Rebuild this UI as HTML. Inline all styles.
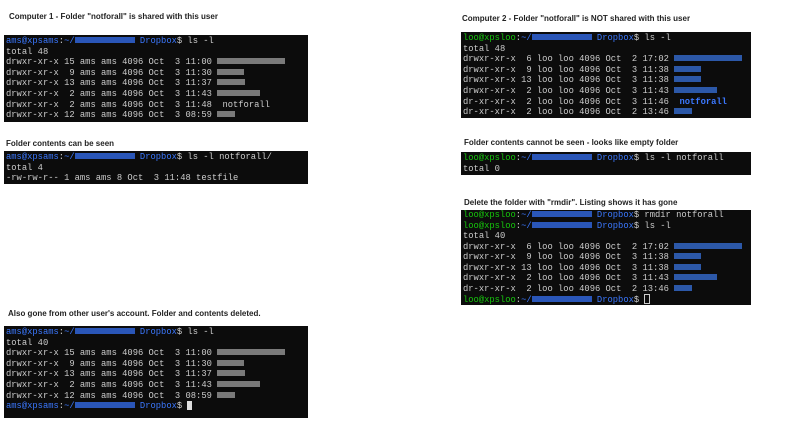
<!DOCTYPE html><html><head><style>
body{margin:0;width:800px;height:426px;background:#fff;position:relative;overflow:hidden;font-family:"Liberation Sans",Arial,sans-serif}
.t{position:absolute;font-size:8px;font-weight:bold;color:#222;white-space:nowrap}
.b{position:absolute;background:#0c0c0c;margin:0;font-family:"Liberation Mono",monospace;font-size:8.8px;line-height:10.6px;color:#cccccc;white-space:pre;padding:1px 0 0 2px;box-sizing:border-box;overflow:hidden}
.u{color:#3b78ff}.g{color:#16c60c}.d{color:#3b78ff}
.bl{display:inline-block;height:6px;vertical-align:0}
.gr{background:#7a7a7a}.bu{background:#2c58a8}.pb{background:#2a56b8}
.cur{display:inline-block;width:5px;height:9px;background:#ddd;vertical-align:-2px}
.cur2{display:inline-block;width:4px;height:8px;border:1px solid #ccc;vertical-align:-2px}
</style></head><body>
<div class="t" style="left:9px;top:12px">Computer 1 - Folder "notforall" is shared with this user</div>
<pre class="b" style="left:4px;top:35px;width:304px;height:87px"><span class="u">ams@xpsams</span>:<span class="d">~/</span><span class="bl pb" style="width:60px"></span><span class="d"> Dropbox</span>$ ls -l
total 48
drwxr-xr-x 15 ams ams 4096 Oct  3 11:00 <span class="bl gr" style="width:68px"></span>
drwxr-xr-x  9 ams ams 4096 Oct  3 11:30 <span class="bl gr" style="width:27px"></span>
drwxr-xr-x 13 ams ams 4096 Oct  3 11:37 <span class="bl gr" style="width:28px"></span>
drwxr-xr-x  2 ams ams 4096 Oct  3 11:43 <span class="bl gr" style="width:43px"></span>
drwxr-xr-x  2 ams ams 4096 Oct  3 11:48  notforall
drwxr-xr-x 12 ams ams 4096 Oct  3 08:59 <span class="bl gr" style="width:18px"></span></pre>
<div class="t" style="left:6px;top:139px">Folder contents can be seen</div>
<pre class="b" style="left:4px;top:151px;width:304px;height:33px"><span class="u">ams@xpsams</span>:<span class="d">~/</span><span class="bl pb" style="width:60px"></span><span class="d"> Dropbox</span>$ ls -l notforall/
total 4
-rw-rw-r-- 1 ams ams 8 Oct  3 11:48 testfile</pre>
<div class="t" style="left:8px;top:309px">Also gone from other user's account. Folder and contents deleted.</div>
<pre class="b" style="left:4px;top:326px;width:304px;height:92px"><span class="u">ams@xpsams</span>:<span class="d">~/</span><span class="bl pb" style="width:60px"></span><span class="d"> Dropbox</span>$ ls -l
total 40
drwxr-xr-x 15 ams ams 4096 Oct  3 11:00 <span class="bl gr" style="width:68px"></span>
drwxr-xr-x  9 ams ams 4096 Oct  3 11:30 <span class="bl gr" style="width:27px"></span>
drwxr-xr-x 13 ams ams 4096 Oct  3 11:37 <span class="bl gr" style="width:28px"></span>
drwxr-xr-x  2 ams ams 4096 Oct  3 11:43 <span class="bl gr" style="width:43px"></span>
drwxr-xr-x 12 ams ams 4096 Oct  3 08:59 <span class="bl gr" style="width:18px"></span>
<span class="u">ams@xpsams</span>:<span class="d">~/</span><span class="bl pb" style="width:60px"></span><span class="d"> Dropbox</span>$ <span class="cur"></span></pre>
<div class="t" style="left:462px;top:14px">Computer 2 - Folder "notforall" is NOT shared with this user</div>
<pre class="b" style="left:461px;top:32px;width:290px;height:86px"><span class="g">loo@xpsloo</span>:<span class="d">~/</span><span class="bl pb" style="width:60px"></span><span class="d"> Dropbox</span>$ ls -l
total 48
drwxr-xr-x  6 loo loo 4096 Oct  2 17:02 <span class="bl bu" style="width:68px"></span>
drwxr-xr-x  9 loo loo 4096 Oct  3 11:38 <span class="bl bu" style="width:27px"></span>
drwxr-xr-x 13 loo loo 4096 Oct  3 11:38 <span class="bl bu" style="width:27px"></span>
drwxr-xr-x  2 loo loo 4096 Oct  3 11:43 <span class="bl bu" style="width:43px"></span>
dr-xr-xr-x  2 loo loo 4096 Oct  3 11:46  <span class="d" style="font-weight:bold">notforall</span>
dr-xr-xr-x  2 loo loo 4096 Oct  2 13:46 <span class="bl bu" style="width:18px"></span></pre>
<div class="t" style="left:464px;top:138px">Folder contents cannot be seen - looks like empty folder</div>
<pre class="b" style="left:461px;top:152px;width:290px;height:23px"><span class="g">loo@xpsloo</span>:<span class="d">~/</span><span class="bl pb" style="width:60px"></span><span class="d"> Dropbox</span>$ ls -l notforall
total 0</pre>
<div class="t" style="left:464px;top:198px">Delete the folder with "rmdir". Listing shows it has gone</div>
<pre class="b" style="left:461px;top:210px;width:290px;height:95px;padding-top:0;line-height:10.5px"><span class="g">loo@xpsloo</span>:<span class="d">~/</span><span class="bl pb" style="width:60px"></span><span class="d"> Dropbox</span>$ rmdir notforall
<span class="g">loo@xpsloo</span>:<span class="d">~/</span><span class="bl pb" style="width:60px"></span><span class="d"> Dropbox</span>$ ls -l
total 40
drwxr-xr-x  6 loo loo 4096 Oct  2 17:02 <span class="bl bu" style="width:68px"></span>
drwxr-xr-x  9 loo loo 4096 Oct  3 11:38 <span class="bl bu" style="width:27px"></span>
drwxr-xr-x 13 loo loo 4096 Oct  3 11:38 <span class="bl bu" style="width:27px"></span>
drwxr-xr-x  2 loo loo 4096 Oct  3 11:43 <span class="bl bu" style="width:43px"></span>
dr-xr-xr-x  2 loo loo 4096 Oct  2 13:46 <span class="bl bu" style="width:18px"></span>
<span class="g">loo@xpsloo</span>:<span class="d">~/</span><span class="bl pb" style="width:60px"></span><span class="d"> Dropbox</span>$ <span class="cur2"></span></pre>
</body></html>
